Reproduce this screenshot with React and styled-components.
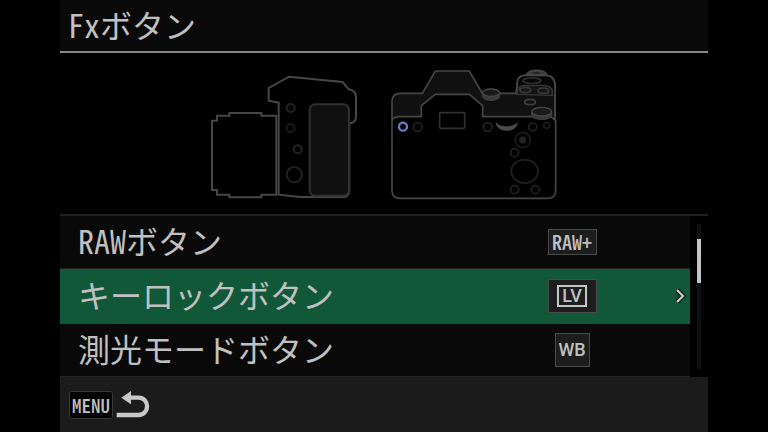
import React, { useState } from 'react'
import styled, { createGlobalStyle } from 'styled-components'

const items = [
    { id: 'raw', label: 'RAWボタン', value: 'RAW+' },
    { id: 'keylock', label: 'キーロックボタン', value: 'LV', framed: true },
    { id: 'metering', label: '測光モードボタン', value: 'WB', square: true },
]

const CameraSide = () => (
    <svg width="148" height="134" viewBox="30 21 444 402" fill="none" stroke="#464646" strokeWidth="6" aria-hidden="true">
        <path d="M229 167H184V159H88V167H51V182H36V390H51V404H88V412H184V404H229Z" />
        <path d="M236 404V128L206 122V84L267 50L428 66L446 88C462 90 468 100 468 112V168C468 182 460 190 448 190V394Q446 411 430 411H300L236 404Z" />
        <rect x="329" y="133" width="118" height="274" rx="16" fill="#101010" stroke="#303030" />
        <g stroke="#222">
            <circle cx="272" cy="144" r="12" />
            <circle cx="272" cy="204" r="12" stroke="#1a1a1a" />
            <circle cx="293" cy="268" r="12" />
            <circle cx="283" cy="344" r="23" />
        </g>
    </svg>
)

const CameraBack = () => (
    <svg width="168" height="134" viewBox="30 21 504 402" fill="none" stroke="#464646" strokeWidth="5" aria-hidden="true">
        <path d="M440 44C446 27 494 27 500 44Z" fill="#333" />
        <ellipse cx="470" cy="39" rx="18" ry="4" fill="#202020" strokeWidth="3" />
        <path d="M36 180V122Q38 100 60 100H127L166 33H268L307 100H408L412 66Q415 46 436 46H496Q525 46 525 78V180L512 170H308V137L268 103H166L124 137V170H54Q40 172 36 180Z" fill="#101010" />
        <path d="M410 102L412 66Q415 46 436 46H496Q525 46 525 78V104Z" fill="#060606" stroke="none" />
        <path d="M36 180V394Q38 415 60 415H504Q527 414 527 392V180" />
        <path d="M410 104L412 66Q415 46 436 46H496Q525 46 525 78V180" />
        <ellipse cx="456" cy="62" rx="27" ry="8" stroke="#303030" strokeWidth="4" />
        <path d="M412 103V91Q416 77 432 76H490Q512 77 517 91V106Z" fill="#161616" stroke="#383838" strokeWidth="4" />
        <ellipse cx="436" cy="90" rx="16" ry="8" stroke="#383838" />
        <ellipse cx="490" cy="92" rx="16" ry="8" stroke="#383838" />
        <ellipse cx="450" cy="126" rx="16" ry="8" stroke="#404040" />
        <path d="M307 98V110C312 125 354 125 359 110V98Z" fill="#3a3a3a" stroke="#404040" strokeWidth="3" />
        <ellipse cx="333" cy="98" rx="26" ry="11" fill="#1a1a1a" stroke="#484848" strokeWidth="4" />
        <path d="M455 155V168C460 182 510 182 515 168V155Z" fill="#3a3a3a" stroke="#404040" strokeWidth="3" />
        <ellipse cx="485" cy="155" rx="30" ry="13" fill="#1a1a1a" stroke="#484848" strokeWidth="4" />
        <path d="M347 186C359 203 401 203 413 186C413 221 347 221 347 186Z" fill="#4a4a4a" stroke="none" />
        <rect x="179" y="158" width="75" height="47" rx="3" stroke="#303030" />
        <g stroke="#222">
            <circle cx="113" cy="201" r="13" />
            <circle cx="323" cy="201" r="13" />
            <circle cx="458" cy="201" r="12" />
            <circle cx="500" cy="196" r="9" stroke="#1a1a1a" />
            <circle cx="428" cy="240" r="23" stroke="#1a1a1a" />
            <circle cx="428" cy="240" r="8" fill="#222" />
            <circle cx="404" cy="278" r="12" />
            <ellipse cx="434" cy="334" rx="40" ry="35" />
            <circle cx="404" cy="389" r="12" />
            <circle cx="466" cy="389" r="12" />
        </g>
        <circle cx="69" cy="200" r="12" stroke="#6680c8" strokeWidth="7" />
    </svg>
)

const App = () => {
    const [selected, setSelected] = useState('keylock')

    return (
        <Screen>
            <GlobalStyle />
            <Header>
                <Title>Fxボタン</Title>
            </Header>
            <Preview>
                <CameraSide />
                <CameraBack />
            </Preview>
            <Body>
                <List>
                    {items.map((item) => (
                        <Row key={item.id} $active={item.id === selected} onClick={() => setSelected(item.id)}>
                            <Label>{item.label}</Label>
                            <Slot>
                                <Badge $tall={item.framed || item.square} $square={item.square}>
                                    {item.framed ? <Frame>{item.value}</Frame> : item.value}
                                </Badge>
                            </Slot>
                            <Arrow>
                                {item.id === selected && (
                                    <svg width="12" height="18" viewBox="0 0 12 18" fill="none" aria-hidden="true">
                                        <path d="M2 3L8 9L2 15" stroke="#14281e" strokeWidth="5" />
                                        <path d="M2 3L8 9L2 15" stroke="#cdcdcd" strokeWidth="2" />
                                    </svg>
                                )}
                            </Arrow>
                        </Row>
                    ))}
                </List>
                <Track>
                    <Thumb />
                </Track>
            </Body>
            <Footer>
                <MenuButton>
                    <MenuKey>MENU</MenuKey>
                    <svg width="34" height="28" viewBox="0 0 102 84" fill="none" aria-hidden="true">
                        <path d="M40 20H67C102 20 102 72 67 72H2" stroke="#c8c8c8" strokeWidth="13" />
                        <path d="M16 20L45 0V40Z" fill="#c8c8c8" />
                    </svg>
                </MenuButton>
            </Footer>
        </Screen>
    )
}

const GlobalStyle = createGlobalStyle`
    * {
        box-sizing: border-box;
    }
    body {
        margin: 0;
        background: #000;
        color: #c0c0c0;
        font-family: "Noto Sans CJK JP", sans-serif;
        font-weight: 400;
        font-feature-settings: "hwid";
    }
    button {
        border: 0;
        padding: 0;
        color: inherit;
        font: inherit;
        font-feature-settings: inherit;
        text-align: left;
        cursor: pointer;
    }
    svg {
        display: block;
        flex: none;
    }
`;

const Screen = styled.div`
    display: flex;
    flex-direction: column;
    min-height: 100vh;
    padding: 0 60px;
`;

const Header = styled.header`
    padding: 4px 8px 7px;
    background: #090909;
    border-bottom: 2px solid #868686;
`;

const Title = styled.h1`
    margin: 0;
    font-size: 32px;
    line-height: 40px;
    font-weight: 400;
`;

const Preview = styled.div`
    display: flex;
    justify-content: center;
    gap: 32px;
    padding: 14px 0 13px;
    border-bottom: 2px solid #222;
`;

const Body = styled.main`
    display: flex;
`;

const List = styled.div`
    flex: 1;
    display: flex;
    flex-direction: column;
`;

const Row = styled.button`
    display: flex;
    align-items: center;
    height: ${({$active}) => $active ? '55px' : '53px'};
    padding-left: 18px;
    background: ${({$active}) => $active ? '#105838' : '#090909'};
    border-bottom: 1px solid ${({$active}) => $active ? '#105838' : '#222'};
`;

const Label = styled.span`
    flex: 1;
    padding-bottom: 4px;
    font-size: 32px;
    line-height: 40px;
`;

const Slot = styled.span`
    display: flex;
    justify-content: center;
    width: 50px;
`;

const Badge = styled.span`
    display: flex;
    align-items: center;
    justify-content: center;
    width: ${({$square}) => $square ? '35px' : '49px'};
    height: ${({$tall}) => $tall ? '34px' : '26px'};
    background: #1c1e1e;
    border: 1px solid #484848;
    font-family: ${({$tall}) => $tall ? 'Roboto, sans-serif' : 'inherit'};
    font-size: ${({$tall}) => $tall ? '18px' : '20px'};
    line-height: 20px;
    font-weight: 500;
`;

const Frame = styled.span`
    padding: 0 3px;
    border: 2px solid #c4c4c4;
    line-height: 18px;
`;

const Arrow = styled.span`
    display: flex;
    justify-content: flex-end;
    width: 93px;
    padding-right: 3px;
`;

const Track = styled.div`
    width: 4px;
    margin: 8px 7px;
    padding-top: 15px;
    background: #101010;
`;

const Thumb = styled.div`
    height: 44px;
    background: #c4c4c4;
`;

const Footer = styled.footer`
    flex: 1;
    padding: 14px 9px 13px;
    background: #1b1b1b;
`;

const MenuButton = styled.button`
    display: flex;
    align-items: center;
    gap: 3px;
    background: none;
`;

const MenuKey = styled.span`
    width: 44px;
    background: #000;
    border: 1px solid #383838;
    border-radius: 3px;
    font-size: 19px;
    line-height: 26px;
    font-weight: 500;
    text-align: center;
`;

export default App
